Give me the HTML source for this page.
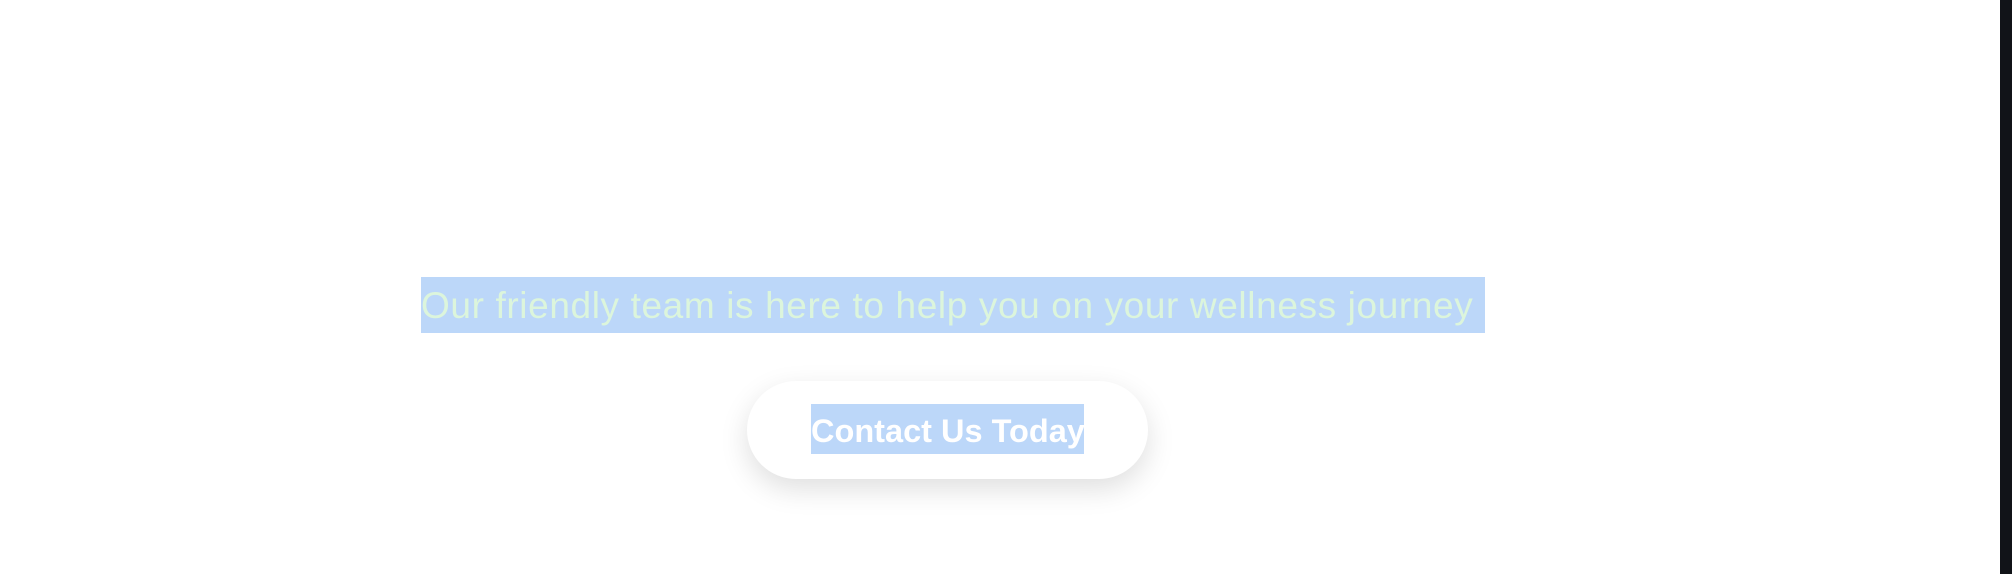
<!DOCTYPE html>
<html><head><style>
html,body{margin:0;padding:0;width:2012px;height:574px;overflow:hidden;background:#fff;font-family:"Liberation Sans",sans-serif;}
.bar{position:absolute;left:2000px;top:0;width:12px;height:574px;background:#111318;}
.p{position:absolute;left:421px;top:277px;width:1064px;height:56px;background:#bcd7f9;color:#dcf5dc;font-size:37px;line-height:58px;white-space:nowrap;letter-spacing:0.62px;overflow:hidden;}
.btn{position:absolute;left:747px;top:381px;width:401px;height:98px;border-radius:49px;background:#fff;box-shadow:0 10px 28px rgba(0,0,0,0.13);}
.bt{position:absolute;left:811px;top:404px;width:273px;height:50px;background:#bcd7f9;color:#fff;font-weight:bold;font-size:32.5px;line-height:54px;white-space:nowrap;text-align:center;overflow:hidden;}
</style></head><body>
<div class="p">Our friendly team is here to help you on your wellness journey</div>
<div class="btn"></div>
<div class="bt">Contact Us Today</div>
<div class="bar"></div>
</body></html>
